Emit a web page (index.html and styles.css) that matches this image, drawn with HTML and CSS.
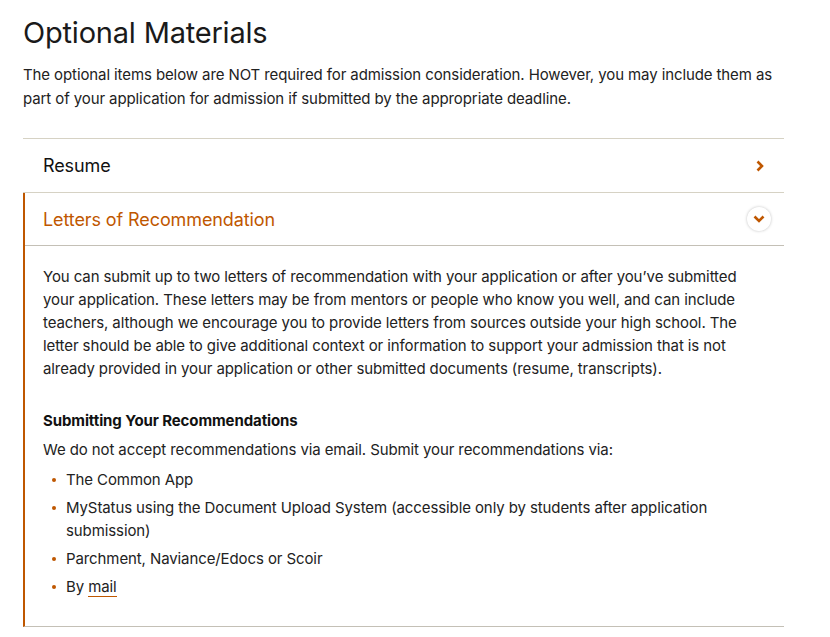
FILE: index.html
```html
<!DOCTYPE html>
<html lang="en">
<head>
<meta charset="utf-8">
<title>Optional Materials</title>
<link rel="stylesheet" href="styles.css">
</head>
<body>
<main class="page">
  <h1 class="title">Optional Materials</h1>
  <p class="intro">The optional items below are NOT required for admission consideration. However, you may include them as part of your application for admission if submitted by the appropriate deadline.</p>
  <div class="accordion">
    <div class="item">
      <div class="item-head">
        <span class="item-title">Resume</span>
        <svg class="chev-right" width="10" height="12" viewBox="0 0 10 12"><path d="M2.5 1.5 L7 6 L2.5 10.5" fill="none" stroke="#bf5700" stroke-width="2.6"/></svg>
      </div>
    </div>
    <div class="item open">
      <div class="item-head">
        <span class="item-title">Letters of Recommendation</span>
        <span class="circle-btn"><svg width="12" height="10" viewBox="0 0 12 10"><path d="M1.5 2.5 L6 7 L10.5 2.5" fill="none" stroke="#bf5700" stroke-width="2.6"/></svg></span>
      </div>
      <div class="item-body">
        <p>You can submit up to two letters of recommendation with your application or after you’ve submitted your application. These letters may be from mentors or people who know you well, and can include teachers, although we encourage you to provide letters from sources outside your high school. The letter should be able to give additional context or information to support your admission that is not already provided in your application or other submitted documents (resume, transcripts).</p>
        <h3 class="sub">Submitting Your Recommendations</h3>
        <p class="lead">We do not accept recommendations via email. Submit your recommendations via:</p>
        <ul class="list">
          <li>The Common App</li>
          <li>MyStatus using the Document Upload System (accessible only by students after application submission)</li>
          <li>Parchment, Naviance/Edocs or Scoir</li>
          <li>By <a href="#" class="link">mail</a></li>
        </ul>
      </div>
    </div>
  </div>
</main>
</body>
</html>
```
FILE: styles.css
```css
* { box-sizing: border-box; }
body {
  margin: 0;
  background: #fff;
  font-family: Inter, Roboto, "Liberation Sans", sans-serif;
  color: #333f48;
  letter-spacing: -0.1px;
}
.page {
  padding: 14px 46px 0 23px;
}
.title {
  margin: 0;
  font-size: 29px;
  font-weight: 400;
  line-height: 38px;
  color: #1a1a1a;
  letter-spacing: -0.2px;
}
.intro {
  margin: 11px 0 0;
  font-size: 15px;
  line-height: 24px;
  color: #222;
}
.accordion {
  margin-top: 27px;
  border-top: 1px solid #d6d2c4;
}
.item {
  border-bottom: 1px solid #d6d2c4;
}
.item-head {
  height: 53px;
  display: flex;
  align-items: center;
  justify-content: space-between;
  padding: 0 13px 0 20px;
}
.item-title {
  font-size: 18px;
  color: #111;
}
.chev-right { margin-right: 6px; }
.open {
  border-left: 2px solid #bf5700;
  border-bottom-color: #c4c0b6;
}
.open .item-head {
  padding-left: 18px;
  border-bottom: 1px solid #c4c0b6;
}
.open .item-title { color: #bf5700; }
.circle-btn {
  width: 24px;
  height: 24px;
  border-radius: 50%;
  background: #fff;
  box-shadow: 0 0 3px rgba(0,0,0,0.25);
  display: flex;
  align-items: center;
  justify-content: center;
}
.item-body {
  padding: 19px 30px 23px 18px;
  font-size: 15px;
  line-height: 23px;
  color: #222;
}
.item-body p { margin: 0; }
.sub {
  margin: 29px 0 6px;
  font-size: 15px;
  font-weight: 700;
  line-height: 23px;
  color: #111;
}
.list {
  margin: 7px 0 0;
  padding: 0 0 0 23px;
  list-style: none;
}
.list li {
  position: relative;
  margin-bottom: 5px;
}
.list li::before {
  content: "";
  position: absolute;
  left: -14px;
  top: 10px;
  width: 4px;
  height: 4px;
  border-radius: 50%;
  background: #bf5700;
}
.link {
  color: inherit;
  text-decoration: none;
  border-bottom: 1px solid #bf5700;
}
```
